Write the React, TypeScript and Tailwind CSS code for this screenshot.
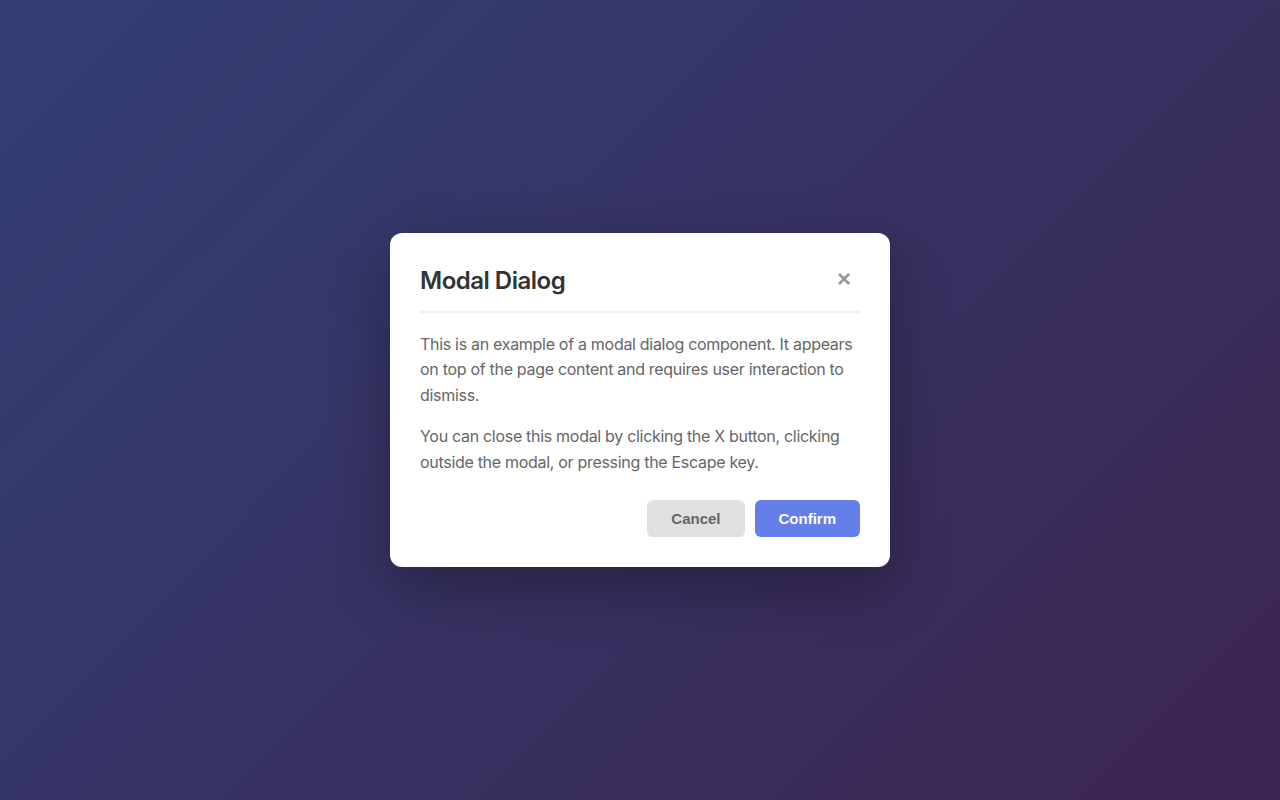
export default function App() {
  return (
    <div className="min-h-screen w-full flex items-center justify-center bg-[linear-gradient(135deg,#333f75_0%,#3b2551_100%)]">
      <div className="w-[500px] bg-white rounded-xl p-[30px] shadow-[0_20px_60px_rgba(0,0,0,0.3)] font-['Inter',sans-serif]">
        {/* Header */}
        <div className="flex items-center justify-between pb-4 border-b-2 border-[#f0f0f0]">
          <h2 className="text-2xl font-semibold text-[#333333] leading-8 mt-0.5 -mb-0.5 tracking-[-0.5px]">Modal Dialog</h2>
          <button className="w-8 h-8 flex items-center justify-center text-[#999999] text-[24px] leading-none font-bold font-['Liberation_Sans',sans-serif]">
            ×
          </button>
        </div>

        {/* Body */}
        <div className="mt-[19px] text-base leading-[1.6] text-[#666666] tracking-[-0.3px]">
          <p className="mb-4">
            This is an example of a modal dialog component. It appears on top of the page content and requires user interaction to dismiss.
          </p>
          <p>
            You can close this modal by clicking the X button, clicking outside the modal, or pressing the Escape key.
          </p>
        </div>

        {/* Footer */}
        <div className="mt-[25px] flex justify-end gap-2.5 font-['Liberation_Sans',sans-serif]">
          <button className="px-6 py-2.5 rounded-md bg-[#e0e0e0] text-[#666666] text-[15px] font-bold leading-[17px]">
            Cancel
          </button>
          <button className="px-6 py-2.5 rounded-md bg-[#667eea] text-white text-[15px] font-bold leading-[17px]">
            Confirm
          </button>
        </div>
      </div>
    </div>
  );
}
